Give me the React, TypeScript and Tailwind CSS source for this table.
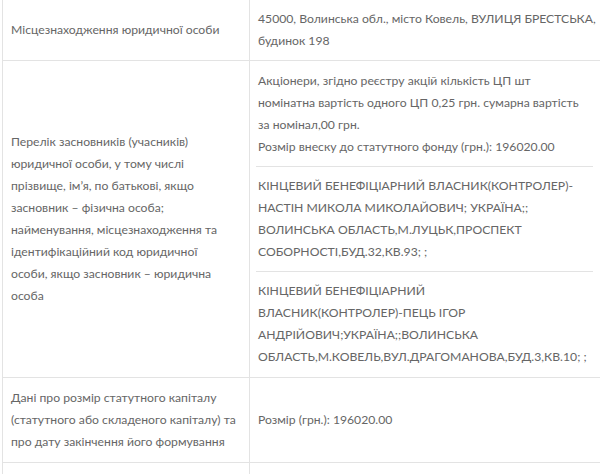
import React from "react";

const Lines = ({ lines }: { lines: string[] }) => (
  <>
    {lines.map((l, i) => (
      <div key={i} className="whitespace-nowrap">
        {l}
      </div>
    ))}
  </>
);

export default function App() {
  return (
    <div className="w-[600px] h-[474px] overflow-hidden bg-white">
      <div className="ml-[2px] border-l border-[#e3e3e3] font-['Lato',sans-serif] text-[12.2px] leading-[22px] text-[#666666]">
        {/* Row 1 */}
        <div className="flex border-b border-[#e3e3e3]">
          <div className="w-[247px] shrink-0 border-r border-[#e3e3e3] px-[8px] flex items-center">
            <Lines lines={["Місцезнаходження юридичної особи"]} />
          </div>
          <div className="flex-1 pl-[6px] pr-[7px] py-[8px]">
            <div className="px-[2px]">
              <Lines
                lines={[
                  "45000, Волинська обл., місто Ковель, ВУЛИЦЯ БРЕСТСЬКА,",
                  "будинок 198",
                ]}
              />
            </div>
          </div>
        </div>

        {/* Row 2 */}
        <div className="flex border-b border-[#e3e3e3]">
          <div className="w-[247px] shrink-0 border-r border-[#e3e3e3] px-[8px] flex flex-col justify-center">
            <Lines
              lines={[
                "Перелік засновників (учасників)",
                "юридичної особи, у тому числі",
                "прізвище, ім’я, по батькові, якщо",
                "засновник – фізична особа;",
                "найменування, місцезнаходження та",
                "ідентифікаційний код юридичної",
                "особи, якщо засновник – юридична",
                "особа",
              ]}
            />
          </div>
          <div className="flex-1 pl-[6px] pr-[7px] py-[1px]">
            <div className="px-[2px] py-[8px] border-b border-[#e3e3e3]">
              <Lines
                lines={[
                  "Акціонери, згідно реєстру акцій кількість ЦП шт",
                  "номінатна вартість одного ЦП 0,25 грн. сумарна вартість",
                  "за номінал,00 грн.",
                  "Розмір внеску до статутного фонду (грн.): 196020.00",
                ]}
              />
            </div>
            <div className="px-[2px] py-[8px] border-b border-[#e3e3e3]">
              <Lines
                lines={[
                  "КІНЦЕВИЙ БЕНЕФІЦІАРНИЙ ВЛАСНИК(КОНТРОЛЕР)-",
                  "НАСТІН МИКОЛА МИКОЛАЙОВИЧ; УКРАЇНА;;",
                  "ВОЛИНСЬКА ОБЛАСТЬ,М.ЛУЦЬК,ПРОСПЕКТ",
                  "СОБОРНОСТІ,БУД.32,КВ.93; ;",
                ]}
              />
            </div>
            <div className="px-[2px] py-[8px]">
              <Lines
                lines={[
                  "КІНЦЕВИЙ БЕНЕФІЦІАРНИЙ",
                  "ВЛАСНИК(КОНТРОЛЕР)-ПЕЦЬ ІГОР",
                  "АНДРІЙОВИЧ;УКРАЇНА;;ВОЛИНСЬКА",
                  "ОБЛАСТЬ,М.КОВЕЛЬ,ВУЛ.ДРАГОМАНОВА,БУД.3,КВ.10; ;",
                ]}
              />
            </div>
          </div>
        </div>

        {/* Row 3 */}
        <div className="flex h-[85px] border-b border-[#e3e3e3]">
          <div className="w-[247px] shrink-0 border-r border-[#e3e3e3] px-[8px] flex flex-col justify-center">
            <Lines
              lines={[
                "Дані про розмір статутного капіталу",
                "(статутного або складеного капіталу) та",
                "про дату закінчення його формування",
              ]}
            />
          </div>
          <div className="flex-1 pl-[6px] pr-[7px] flex items-center">
            <div className="px-[2px]">
              <Lines lines={["Розмір (грн.): 196020.00"]} />
            </div>
          </div>
        </div>

        {/* Row 4 */}
        <div className="flex h-[40px]">
          <div className="w-[247px] shrink-0 border-r border-[#e3e3e3]" />
          <div className="flex-1" />
        </div>
      </div>
    </div>
  );
}
